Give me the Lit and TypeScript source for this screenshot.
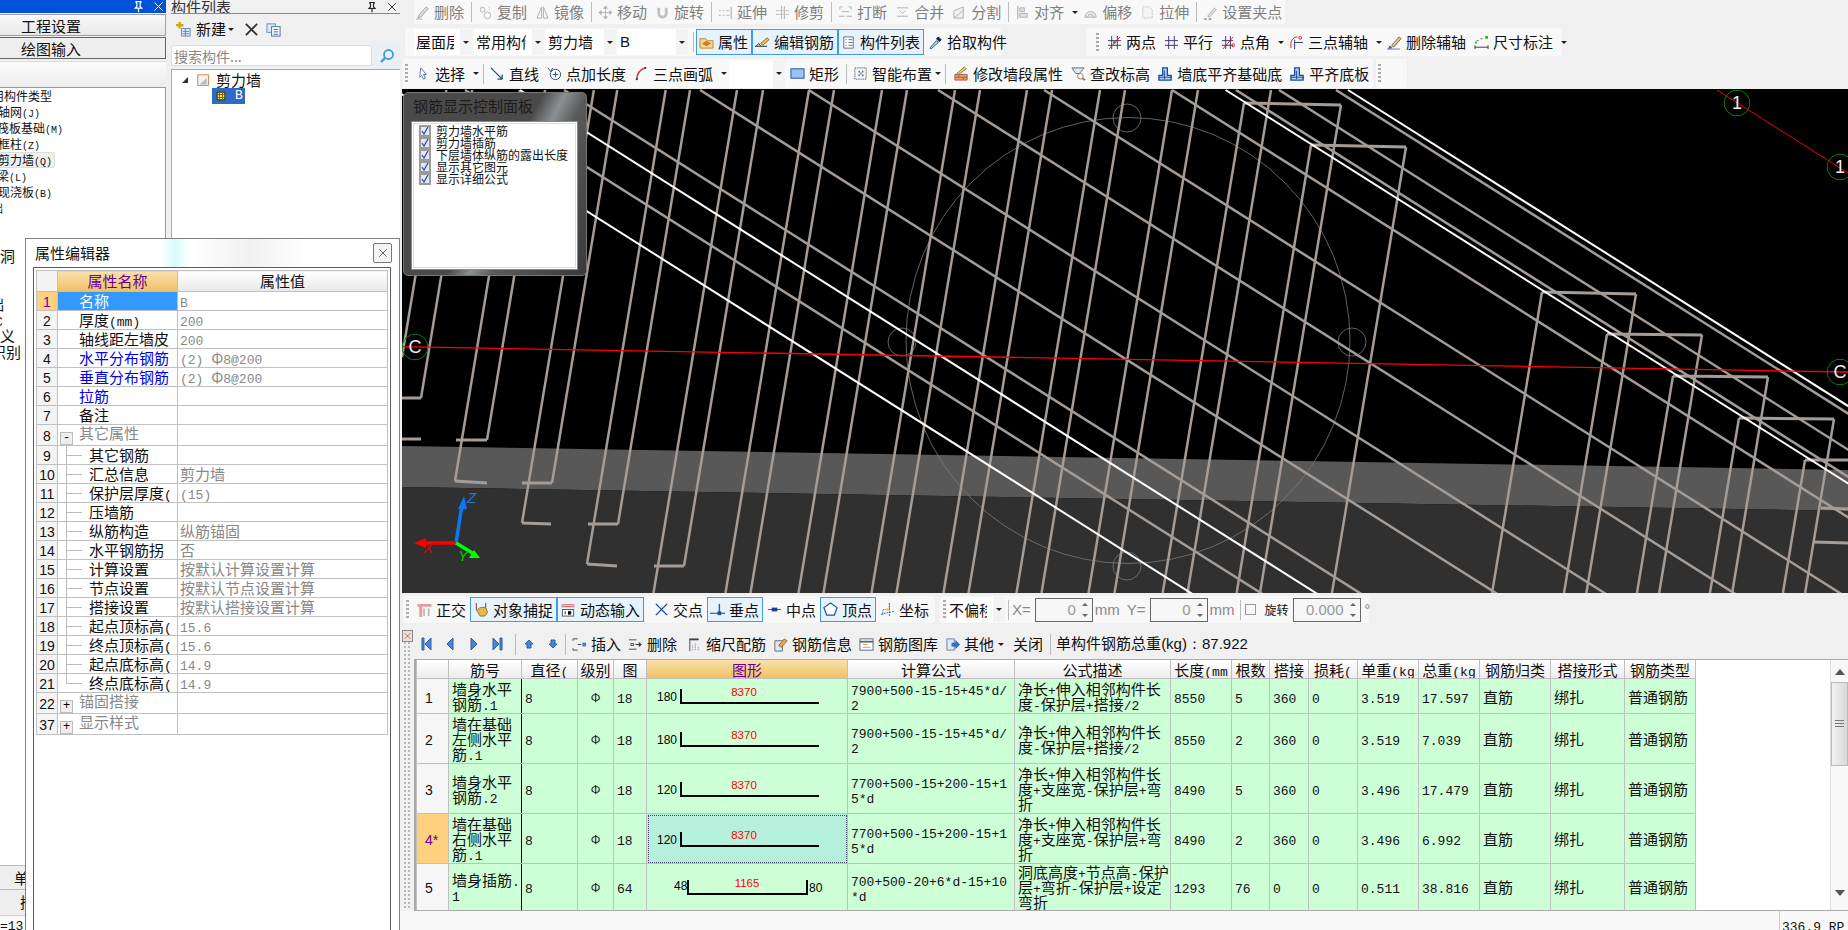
import { LitElement, html, css, svg } from 'lit';
import { customElement } from 'lit/decorators.js';

const mix = (s: string) =>
  s.split('\n').map(
    (line, i) => html`${i ? html`<br />` : ''}${line
      .split(/([\x20-\x7e]+)/)
      .map((p, j) => (j % 2 ? html`<span class="a">${p}</span>` : p))}`
  );

const ICONS: Record<string, unknown> = {
  del: svg`<path d="M3 14l3-1 8-9-2-2-8 9z" fill="#ddd" stroke="#999"/><path d="M1 15h7" stroke="#aaa"/>`,
  copy: svg`<circle cx="5" cy="5" r="2.5" fill="none" stroke="#aaa"/><circle cx="10" cy="11" r="3.5" fill="none" stroke="#aaa"/><path d="M2 2h3M12 2v3" stroke="#bbb" stroke-dasharray="1 1"/>`,
  mirror: svg`<path d="M7 2L2 14h5zM9 2l5 12H9z" fill="none" stroke="#aaa"/>`,
  move: svg`<path d="M8 1v14M1 8h14M8 1L6 3.5h4zM8 15l-2-2.500h4zM1 8l2.500-2v4zM15 8l-2.500-2v4z" fill="#ccc" stroke="#aaa"/>`,
  rotate: svg`<path d="M4 3v6a4 4 0 008 0V3" fill="none" stroke="#bbb" stroke-width="3"/>`,
  extend: svg`<path d="M1 6h2M5 6h2M1 11h2M5 11h2M9 6h3M9 11h3" stroke="#aaa"/><path d="M14 2v13" stroke="#999"/>`,
  trim: svg`<path d="M7 1v14M10 1v14" stroke="#aaa"/><path d="M1 6h14M1 10h14" stroke="#bbb"/>`,
  brk: svg`<path d="M2 5V2h3M14 5V2h-3M1 12h6M9 12h6M4 7h8" stroke="#aaa" fill="none"/>`,
  merge: svg`<path d="M2 3h12M2 12h12M5 6l3 3 3-3" stroke="#aaa" fill="none"/>`,
  split: svg`<path d="M2 14V6l10-4v12z M2 14l11-9" stroke="#aaa" fill="#eee"/>`,
  align: svg`<path d="M3 1v14" stroke="#999"/><path d="M5 3h5v4H5zM5 9h8v4H5z" fill="#ddd" stroke="#aaa"/>`,
  offset: svg`<path d="M2 13a6 6 0 0112 0z M5 13a3 3 0 016 0" fill="#e8e8e8" stroke="#aaa"/>`,
  stretch: svg`<path d="M3 2h7l3 3v9H3z" fill="#f4f4f4" stroke="#bbb" stroke-dasharray="2 1"/>`,
  grip: svg`<path d="M5 12l7-9 2 2-7 8z" fill="#ddd" stroke="#aaa"/><path d="M1 15h3M6 15h3" stroke="#999" stroke-width="2"/>`,
  prop: svg`<path d="M1 4h6l2 2h6v8H1z" fill="#f7d98a" stroke="#b8863a"/><path d="M3 9l5-3 5 3-5 3z" fill="#d8772a"/>`,
  edit: svg`<path d="M6 9l7-6 2 2-7 6z" fill="#f4c542" stroke="#886622"/><path d="M0 12h13" stroke="#222"/><path d="M1 12l3-3 2 3" fill="none" stroke="#333"/>`,
  list: svg`<path d="M3 2h10v12H3z" fill="#fff" stroke="#667"/><path d="M5 5h1M5 8h1M5 11h1" stroke="#36a"/><path d="M8 5h4M8 8h4M8 11h4" stroke="#667"/>`,
  pick: svg`<path d="M2 14l7-8 2 2-8 7z" fill="#bde" stroke="#15a"/><path d="M9 4l2-2 3 3-2 2z" fill="#124" stroke="#124"/>`,
  two: svg`<path d="M5 1v14M11 1v14M1 6h14M1 11h14" stroke="#336"/><path d="M2 15L14 2" stroke="#c22"/><circle cx="8" cy="8" r="1.500" fill="#2a2"/>`,
  par: svg`<path d="M5 1v14M11 1v14M1 6h14M1 11h14" stroke="#336"/>`,
  ang: svg`<path d="M5 1v14M10 1v14M1 6h12M1 11h12" stroke="#336"/><path d="M2 15L13 2" stroke="#c22"/><circle cx="13" cy="11" r="1.500" fill="none" stroke="#c22"/>`,
  arc3: svg`<path d="M2 14V9a7 7 0 017-7" fill="none" stroke="#c22"/><path d="M6 15V5M6 8h9" stroke="#336"/><circle cx="12" cy="3" r="1.500" fill="none" stroke="#c22"/>`,
  delax: svg`<path d="M5 11l8-9 2 2-8 9z" fill="#e9c46a" stroke="#667"/><path d="M3 11l3 3-5 1z" fill="#558"/><path d="M0 15h14" stroke="#58a"/>`,
  dim: svg`<path d="M1 13h14M1 11v4M15 11v4" stroke="#333"/><path d="M3 6h2M7 4h2" stroke="#555"/><rect x="12" y="1" width="3" height="3" fill="#3a3"/><rect x="1" y="7" width="2" height="2" fill="#3a3"/>`,
  sel: svg`<path d="M5 2l6 7H8l2 4-2 1-2-4-2 2z" fill="#fff" stroke="#57a"/>`,
  line: svg`<path d="M1 2l12 12M13 14V9M13 14H8" fill="none" stroke="#157" stroke-width="1.400"/>`,
  addlen: svg`<circle cx="9" cy="9" r="5.500" fill="#fff" stroke="#247"/><path d="M9 6v6M6 9h6" stroke="#247"/><path d="M1 2l3 4 2-4" fill="none" stroke="#247"/>`,
  arc: svg`<path d="M3 14C3 8 6 4 12 2" fill="none" stroke="#c33" stroke-width="1.500"/><circle cx="3" cy="14" r="1.200" fill="#246"/><circle cx="12" cy="2" r="1.200" fill="#246"/>`,
  rect: svg`<rect x="1" y="3" width="14" height="10" fill="#9cc4f2" stroke="#1a4fa8"/>`,
  smart: svg`<rect x="2" y="2" width="12" height="12" fill="#f2f6fa" stroke="#333" stroke-dasharray="1 1"/><path d="M6 6h1M10 6h1M6 10h1M10 10h1M8 8h1" stroke="#124" stroke-width="2"/>`,
  wall: svg`<path d="M1 9h13v6H1z" fill="#e6a45c" stroke="#a55"/><path d="M1 12h13M5 9v3M10 12v3" stroke="#a55"/><path d="M3 8l8-7 2 2-8 6z" fill="#f0d060" stroke="#775"/>`,
  height: svg`<path d="M1 2h13l-5 6H5z" fill="#dfe8f0" stroke="#667"/><circle cx="10" cy="11" r="3" fill="#fff" stroke="#975"/><path d="M12 13l3 2" stroke="#975" stroke-width="2"/>`,
  base: svg`<path d="M5 2h5v8h4v5H1v-5h4z" fill="#bcd4f0" stroke="#154a9c" stroke-width="1.400"/><path d="M7 5v9M1 12h14" stroke="#154a9c"/>`,
  ortho: svg`<path d="M1 2h15v3H6v11H3V5H1z" fill="#e59a9a"/><path d="M8 7v8M13 7v8" stroke="#bbb" stroke-width="2"/>`,
  snap: svg`<path d="M3 1v8M13 1v8" stroke="#733"/><path d="M4 10c0-4 6-5 9-4l2 5-3 4H7z" fill="#e8b84e" stroke="#96701f"/>`,
  dyn: svg`<path d="M1 3h14M1 5h14" stroke="#c55"/><rect x="2" y="8" width="12" height="7" fill="#fff" stroke="#555"/><path d="M5 10v3M8 10h3v3H8" stroke="#222"/>`,
  cross: svg`<path d="M2 2l12 12M14 2L2 14" stroke="#0f3f9e" stroke-width="1.400"/>`,
  perp: svg`<path d="M0 12h16" stroke="#333"/><path d="M10 2v10" stroke="#1d5fc0" stroke-width="1.500"/><rect x="8" y="10" width="4" height="4" fill="#1d4fa0"/>`,
  mid: svg`<path d="M1 8h14" stroke="#357"/><rect x="5" y="6" width="6" height="4" fill="#1d3f90"/>`,
  vertex: svg`<path d="M8 1l7 5-3 8H4L1 6z" fill="#fff" stroke="#1d4fa0" stroke-width="1.300"/>`,
  coord: svg`<path d="M3 14V8h7V2" fill="none" stroke="#26a" stroke-dasharray="1 1"/><path d="M1 13l14-3M10 1v14" stroke="#26a" stroke-dasharray="2 1"/><circle cx="8" cy="8" r="1.500" fill="#fc3"/>`,
  ins: svg`<path d="M1 2h5M1 14h5M1 2v2M1 12v2" stroke="#444"/><path d="M6 8h4" stroke="#444"/><rect x="11" y="6" width="4" height="4" fill="#4a7fc8"/>`,
  del2: svg`<path d="M1 3h8M1 13h8M3 7h3v2H3z" stroke="#445" fill="none"/><path d="M8 8h6M14 8l-2-2v4z" fill="#333" stroke="#333"/>`,
  scale: svg`<path d="M3 2h9v1H3zM3 2v13" stroke="#445"/><path d="M6 14V9M9 14V6M12 14v-3" stroke="#4a7fc8" stroke-dasharray="1 1"/>`,
  info: svg`<path d="M2 4h8v11H2z" fill="#dfe8f3" stroke="#667"/><path d="M6 9l6-7 3 2-6 7z" fill="#e7a94e" stroke="#964"/>`,
  lib: svg`<rect x="1" y="2" width="14" height="12" fill="#fff" stroke="#567"/><path d="M1 5h14" stroke="#567" stroke-width="2"/><path d="M4 8h5M4 11h8" stroke="#c9a050"/>`,
  other: svg`<path d="M2 2h8v12H2z" fill="#dce8f5" stroke="#6a88a8"/><path d="M7 6h4V3l5 5-5 5v-3H7z" fill="#2f6fc4"/>`,
  add: svg`<rect x="6" y="7" width="9" height="8" fill="#e3eefb" stroke="#5b86be"/><path d="M7 10h7M7 12.500h7M10 7v8" stroke="#5b86be"/><path d="M4 0v7M0 3.500h8" stroke="#d2a916" stroke-width="2.600"/>`,
  x: svg`<path d="M2 2l12 12M14 2L2 14" stroke="#333" stroke-width="2"/>`,
  dup: svg`<rect x="1" y="2" width="9" height="9" fill="#d9e8f8" stroke="#6b8fba"/><rect x="6" y="5" width="9" height="10" fill="#fff" stroke="#3a6ea5"/><path d="M8 8h5M8 10.500h5M8 13h5" stroke="#3a6ea5"/>`,
  find: svg`<circle cx="9.500" cy="6.500" r="4.500" fill="#e8f6ff" stroke="#3f9bde" stroke-width="1.800"/><path d="M6 10l-4 4" stroke="#3f9bde" stroke-width="2.400"/>`,
  wallnode: svg`<rect x="1" y="1" width="13" height="13" fill="#f2f2f2" stroke="#c8703a"/><path d="M3 13l9-8v8z" fill="#bbb"/>`,
  node: svg`<rect x="3" y="3" width="10" height="10" fill="#ffee22" stroke="#222"/><path d="M1 6h14M1 10h14M6 1v14M10 1v14" stroke="#664400"/>`,
  pin: svg`<path d="M5 2h6v1l-1 1v4l2 2H4l2-2V4L5 3zM8 10v5" fill="none" stroke="currentColor" stroke-width="1.500"/>`,
  close: svg`<path d="M3 3l10 10M13 3L3 13" stroke="currentColor" stroke-width="1.200"/>`,
};

const ic = (name: string) => html`<svg class="ic" viewBox="0 0 16 16">${ICONS[name]}</svg>`;
const tool = (name: string, label: string) => html`<span class="tool">${ic(name)}<span>${label}</span></span>`;
const on = (name: string, label: string) => html`<span class="tool on">${ic(name)}<span>${label}</span></span>`;
const caret = html`<i class="caret"></i>`;
const sep = html`<i class="sep"></i>`;
const dots = html`<i class="dots"></i>`;
const combo = (label: string, cls: string) =>
  html`<span class="combo ${cls}"><span class="combo-text">${label}</span><span class="combo-drop">${caret}</span></span>`;
const spin = (value: string, cls = '') =>
  html`<span class="spin ${cls}"><span class="spin-val">${value}</span><span class="spin-arrows"><i></i><i></i></span></span>`;

// label, left offset: the dock is scrolled sideways so the names start cut off
const TREE: [string, number][] = [
  ['用构件类型', -8], ['轴网(J)', -2], ['筏板基础(M)', -3], ['框柱(Z)', -2],
  ['剪力墙(Q)', -2], ['梁(L)', -3], ['现浇板(B)', -2], ['础', -9],
  ['', 0], ['', 0], ['窗洞', -15], ['', 0], ['', 0],
  ['础', -11], ['C', -5], ['定义', -15], ['识别', -9],
];

// num, name, value, kind (b = blue, c = tree child, l = last child, + / - box)
const PROPS: [string, string, string, string][] = [
  ['1', '名称', 'B', 'sel'],
  ['2', '厚度(mm)', '200', ''],
  ['3', '轴线距左墙皮', '200', ''],
  ['4', '水平分布钢筋', '(2) Φ8@200', 'b'],
  ['5', '垂直分布钢筋', '(2) Φ8@200', 'b'],
  ['6', '拉筋', '', 'b'],
  ['7', '备注', '', ''],
  ['8', '其它属性', '', '-'],
  ['9', '其它钢筋', '', 'c'],
  ['10', '汇总信息', '剪力墙', 'c'],
  ['11', '保护层厚度(', '(15)', 'c'],
  ['12', '压墙筋', '', 'c'],
  ['13', '纵筋构造', '纵筋锚固', 'c'],
  ['14', '水平钢筋拐', '否', 'c'],
  ['15', '计算设置', '按默认计算设置计算', 'c'],
  ['16', '节点设置', '按默认节点设置计算', 'c'],
  ['17', '搭接设置', '按默认搭接设置计算', 'c'],
  ['18', '起点顶标高(', '15.6', 'c'],
  ['19', '终点顶标高(', '15.6', 'c'],
  ['20', '起点底标高(', '14.9', 'c'],
  ['21', '终点底标高(', '14.9', 'l'],
  ['22', '锚固搭接', '', '+'],
  ['37', '显示样式', '', '+'],
];

const COLS = [32, 73, 56, 36, 33, 201, 167, 156, 61, 38, 39, 49, 61, 61, 71, 74, 71];
const HEAD = ['', '筋号', '直径(', '级别', '图', '图形', '计算公式', '公式描述', '长度(mm', '根数', '搭接', '损耗(', '单重(kg', '总重(kg', '钢筋归类', '搭接形式', '钢筋类型'];

interface Bar {
  n: string; h: number; name: string; d: string; left: string; right?: string; mid: string;
  fx: string; desc: string; len: string; cnt: string; lap: string; w: string; total: string;
}

const FX1 = '7900+500-15-15+45*d/\n2';
const FX2 = '7700+500-15+200-15+1\n5*d';
const DS1 = '净长+伸入相邻构件长\n度-保护层+搭接/2';
const DS2 = '净长+伸入相邻构件长\n度+支座宽-保护层+弯\n折';

const BARS: Bar[] = [
  { n: '1', h: 35, name: '墙身水平\n钢筋.1', d: '18', left: '180', mid: '8370', fx: FX1, desc: DS1, len: '8550', cnt: '5', lap: '360', w: '3.519', total: '17.597' },
  { n: '2', h: 50, name: '墙在基础\n左侧水平\n筋.1', d: '18', left: '180', mid: '8370', fx: FX1, desc: DS1, len: '8550', cnt: '2', lap: '360', w: '3.519', total: '7.039' },
  { n: '3', h: 50, name: '墙身水平\n钢筋.2', d: '18', left: '120', mid: '8370', fx: FX2, desc: DS2, len: '8490', cnt: '5', lap: '360', w: '3.496', total: '17.479' },
  { n: '4*', h: 50, name: '墙在基础\n右侧水平\n筋.1', d: '18', left: '120', mid: '8370', fx: FX2, desc: DS2, len: '8490', cnt: '2', lap: '360', w: '3.496', total: '6.992' },
  { n: '5', h: 46, name: '墙身插筋.\n1', d: '64', left: '48', right: '80', mid: '1165', fx: '700+500-20+6*d-15+10\n*d', desc: '洞底高度+节点高-保护\n层+弯折-保护层+设定\n弯折', len: '1293', cnt: '76', lap: '0', w: '0.511', total: '38.816' },
];

const shape = (b: Bar) => {
  if (b.right) {
    return html`<svg class="shape" viewBox="0 0 200 30">
      <path d="M41 8v14h119V8" fill="none" stroke="#000" stroke-width="2" />
      <text x="27" y="18" class="dim">${b.left}</text>
      <text x="162" y="20" class="dim">${b.right}</text>
      <text x="100" y="15" text-anchor="middle" class="len">${b.mid}</text>
    </svg>`;
  }
  return html`<svg class="shape" viewBox="0 0 200 30">
    <path d="M34 8v14h138" fill="none" stroke="#000" stroke-width="2" />
    <text x="10" y="20" class="dim">${b.left}</text>
    <text x="97" y="15" text-anchor="middle" class="len">${b.mid}</text>
  </svg>`;
};

const LEAN = 0.166;
const SLOPE = 0.632;

// a leg runs up from its low end, leaning right, to the given height
const leg = (x: number, y: number, top: number) => [x, y, x + LEAN * (y - top), top];
const down = (x: number, y: number) => [x, y, x - LEAN * (593 - y), 593];

const TAN_DIAG = [465, 564, 700, 808.6, 938, 1044, 1172, 1236, 1279, 1336];
const WHITE_DIAG = [395, 520, 1225.6, 1348];
const FULL_LEGS = [737, 809, 834, 882, 907, 955, 980, 1027, 1052, 1100, 1125, 1172, 1198, 1271];
const LOW_LEGS = [[402, 357], [421, 398], [455, 481], [487, 440], [522, 523], [552, 483], [587, 564], [618, 524], [684, 566]];
const HOOKS = [
  [402, 398, 421, 398], [402, 439, 421, 439], [456, 440, 487, 440], [455, 481, 487, 483],
  [522, 523, 551, 524], [522, 483, 552, 483], [587, 564, 617, 566], [588, 524, 618, 524], [654, 566, 684, 566],
  [1244, 103, 1341, 105], [1311, 145, 1406, 147], [1542, 292, 1636, 294], [1607, 334, 1702, 335],
  [1673, 376, 1768, 377], [1739, 418, 1834, 419], [1805, 460, 1848, 460], [1821, 508, 1848, 509], [1814, 542, 1848, 543],
];
const TOP_LEGS = [[1244, 103], [1341, 105], [1311, 145], [1406, 147], [1542, 292], [1636, 294], [1607, 334], [1702, 335], [1673, 376], [1768, 377], [1739, 418], [1834, 419], [1805, 460]];

const seg = (l: number[], cls: string) => svg`<line x1=${l[0]} y1=${l[1]} x2=${l[2]} y2=${l[3]} class=${cls} />`;
const diag = (x0: number) => [x0, 90, x0 + 900, 90 + 900 * SLOPE];

const bubble = (x: number, y: number, label: string) => {
  const pts = Array.from({ length: 12 }, (_, i) => {
    const a = (i * Math.PI) / 6 + Math.PI / 12;
    return `${(x + 13 * Math.cos(a)).toFixed(1)},${(y + 13 * Math.sin(a)).toFixed(1)}`;
  }).join(' ');
  return svg`<polygon points=${pts} class="bubble" /><text x=${x} y=${y + 6} text-anchor="middle" class="bubble-text">${label}</text>`;
};

@customElement('app-root')
export class AppRoot extends LitElement {
  static styles = css`
    :host {
      display: flex;
      width: 1848px;
      height: 930px;
      overflow: hidden;
      position: relative;
      background: #f0f0f0;
      font: 15px/18px "Noto Sans CJK SC", "Liberation Sans", sans-serif;
      color: #111;
    }
    .a { font: 13px/0 "Liberation Mono", monospace; }
    i { display: block; font-style: normal; }
    .ic { width: 15px; height: 15px; flex: none; display: block; }

    /* left docks */
    .left { width: 400px; flex: none; display: flex; gap: 5px; }
    .nav { width: 166px; flex: none; display: flex; flex-direction: column; }
    .dock-title {
      height: 13px;
      flex: none;
      background: #0053d8;
      color: #fff;
      display: flex;
      justify-content: flex-end;
      align-items: center;
      gap: 7px;
      padding-right: 1px;
    }
    .dock-title .ic { width: 13px; height: 13px; }
    .nav-btn {
      height: 22px;
      margin-top: 1px;
      flex: none;
      padding-left: 21px;
      line-height: 21px;
      font-size: 15px;
      background: linear-gradient(#fafafa, #e8e8e8);
      border: 1px solid #a0a0a0;
      border-left: 0;
      box-sizing: border-box;
    }
    .nav-btn.dark { border-color: #666; background: #eee; }
    .nav-bar { height: 26px; margin-top: 2px; flex: none; background: linear-gradient(#fbfbfb, #ececec); border-top: 1px solid #ddd; box-sizing: border-box; }
    .nav-tree {
      flex: 1;
      background: #fff;
      border: 1px solid #9a9a9a;
      border-left: 0;
      border-bottom: 0;
      overflow: hidden;
    }
    .nav-row { height: 16px; line-height: 16px; font-size: 12px; white-space: nowrap; }
    .nav-row.big { font-size: 15px; }
    .nav-row span.label { display: inline-block; padding-right: 3px; }
    .nav-row .a { font-size: 10px; }
    .nav-row.big .a { font-size: 13px; }
    .nav-row.hot span.label { background: #efefef; border-radius: 3px; box-shadow: inset 0 0 0 1px #ddd; }
    .nav-foot {
      height: 23px;
      flex: none;
      background: #eee;
      border-top: 1px solid #bbb;
      text-align: right;
      line-height: 23px;
      overflow: hidden;
    }
    .f1 { padding-right: 137px; }
    .f2 { padding-right: 131px; }
    .nav-end { height: 14px; flex: none; line-height: 16px; margin-top: 2px; background: #fafafa; border-top: 1px solid #ccc; overflow: hidden; }

    .list { flex: 1; display: flex; flex-direction: column; min-width: 0; }
    .list-title {
      height: 13px;
      flex: none;
      display: flex;
      justify-content: space-between;
      align-items: center;
      border-bottom: 1px solid #888;
      overflow: hidden;
      font-size: 15px;
      line-height: 10px;
      color: #333;
      padding-right: 2px;
    }
    .list-title div { display: flex; gap: 8px; }
    .list-title .ic { width: 12px; height: 12px; color: #222; }
    .list-bar { height: 30px; flex: none; display: flex; align-items: center; gap: 7px; padding-left: 5px; }
    .list-bar .tool { gap: 5px; }
    .list-search { height: 23px; flex: none; display: flex; align-items: center; background: #eaf0f5; }
    .list-search div {
      width: 201px;
      height: 21px;
      line-height: 20px;
      background: #fff;
      border: 1px solid #ddd;
      border-radius: 2px;
      color: #888;
      font-size: 14px;
      padding-left: 2px;
      box-sizing: border-box;
    }
    .list-search .ic { margin-left: 7px; width: 16px; height: 16px; }
    .list-tree { flex: 1; margin-top: 2px; background: #fff; border-top: 1px solid #aaa; border-left: 1px solid #aaa; padding: 2px 0 0 10px; }
    .node { display: flex; align-items: center; height: 16px; }
    .node .tri { width: 0; height: 0; border-left: 6px solid transparent; border-bottom: 6px solid #333; margin: 0 9px 0 0; }
    .node .ic { width: 13px; height: 13px; margin-right: 6px; }
    .node-child { margin: 0 0 0 30px; width: 33px; background: #2f6bc4; color: #fff; height: 16px; display: flex; align-items: center; padding-left: 3px; box-sizing: border-box; }
    .node-child .ic { width: 12px; height: 12px; margin-right: 8px; }

    /* property window */
    .props {
      position: absolute;
      left: 25px;
      top: 238px;
      width: 375px;
      height: 692px;
      box-sizing: border-box;
      border: 1px solid #808080;
      border-bottom: 0;
      padding: 0 8px 0 7px;
      background: linear-gradient(90deg, #fff 0 36%, #d9fafa 40%, #fff 44%, #f1f1f1 60%, #fff 75%);
      display: flex;
      flex-direction: column;
    }
    .props-title { height: 28px; flex: none; display: flex; justify-content: space-between; align-items: center; padding-left: 2px; }
    .props-close { width: 19px; height: 20px; border: 1px solid #777; border-radius: 2px; box-sizing: border-box; display: flex; align-items: center; justify-content: center; background: #f4f4f4; margin-right: -1px; }
    .props-close .ic { width: 12px; height: 12px; color: #555; }
    .props-body { flex: 1; background: #fff; border: 1px solid #5a5a5a; border-bottom: 0; padding: 2px 0 0 2px; }
    .props table { border-collapse: collapse; table-layout: fixed; width: 351px; }
    .props td, .props th { border: 1px solid #c0c0c0; height: 18px; padding: 0; line-height: 16px; font-weight: 400; white-space: nowrap; overflow: hidden; }
    .props th { height: 20px; background: linear-gradient(#fff, #e8e8e8); }
    .props th.hot { background: linear-gradient(#fae0ac, #f2bf63); color: #660099; }
    .props .num { background: #f4f4f4; text-align: center; }
    .props .num .a, .grid .num .a { font-family: "Liberation Sans", sans-serif; font-size: 14px; }
    .props .val { color: #888; padding-left: 2px; }
    .props .name { padding-left: 21px; }
    .props .child { padding-left: 31px; background: linear-gradient(#bbb, #bbb) 8px 0/1px 100% no-repeat, linear-gradient(#bbb, #bbb) 8px 50%/16px 1px no-repeat; }
    .props .last { padding-left: 31px; background: linear-gradient(#bbb, #bbb) 8px 0/1px 50% no-repeat, linear-gradient(#bbb, #bbb) 8px 50%/16px 1px no-repeat; }
    .props .blue { color: #0000f0; }
    .props .group { color: #888; padding-left: 2px; }
    .props .sel { background: #3399ff; color: #fff; }
    .props .numsel { background: #ffd080; color: #660099; }
    .box { display: inline-block; vertical-align: -2px; width: 11px; height: 11px; border: 1px solid #bbb; background: #eee; color: #000; text-align: center; font: 12px/10px "Liberation Mono", monospace; margin-right: 6px; }

    /* main column */
    .main { flex: 1; min-width: 0; display: flex; flex-direction: column; }
    .row { display: flex; flex: none; }
    .r1 { height: 24px; }
    .r2 { height: 28px; margin-top: 4px; }
    .r3 { height: 29px; margin-top: 3px; }
    .band { display: flex; align-items: center; gap: 8px; background: #f8f8f8; border-radius: 2px; padding: 0 4px 0 2px; }
    .r1 .band { width: 870px; margin-left: 14px; padding: 0 0 0 1px; color: #808080; }
    .r1 .ic { opacity: 0.9; }
    .r2 .b1 { margin-left: 5px; padding-left: 9px; width: 596px; box-sizing: border-box; }
    .r2 .b2 { margin-left: 85px; padding-left: 10px; width: 476px; box-sizing: border-box; }
    .r3 .b1 { margin-left: 3px; width: 970px; box-sizing: border-box; }
    .r3 .b2 { margin-left: 3px; width: 31px; box-sizing: border-box; }
    .tool { display: flex; align-items: center; gap: 4px; white-space: nowrap; flex: none; }
    .tool.on { background: #e6f2fc; box-shadow: inset 0 0 0 1px #3d9be9; height: 26px; padding: 0 4px 0 3px; }
    .caret { width: 0; height: 0; border: 3px solid transparent; border-top-color: #222; border-bottom: 0; margin-right: -3px; flex: none; }
    .caret.tight { margin-left: -5px; }
    .sep { width: 1px; height: 20px; background: #bbb; margin: 0 -2px 0 -1px; flex: none; }
    .dots { width: 3px; height: 19px; flex: none; background: repeating-linear-gradient(#aaa 0 2px, transparent 2px 4px); }
    .combo { display: flex; height: 26px; background: #fff; flex: none; align-items: center; overflow: hidden; }
    .combo-text { flex: 1; overflow: hidden; white-space: nowrap; margin: 0 6px 0 2px; min-width: 0; }
    .combo-drop { width: 12px; height: 100%; background: #f3f3f3; display: flex; align-items: center; justify-content: center; flex: none; }
    .combo-drop .caret { margin: 0; }
    .c58 { width: 58px; }
    .c70 { width: 70px; margin-left: -6px; }
    .cb { font-family: "Liberation Sans", sans-serif; width: 70px; margin-left: -6px; }
    .blank { width: 56px; margin: 0 -3px 0 -3px; height: 28px; }
    .b1 .on + .on { margin-left: -8px; }
    .r2 .sep { margin: 0 -6px 0 -3px; }

    /* viewport */
    .view { position: relative; height: 504px; margin: 1px 0 0 2px; flex: none; background: #000; }
    .view svg { display: block; }
    .t { stroke: #a69c96; stroke-width: 2.500; }
    .w { stroke: #fff; stroke-width: 2; }
    .k { stroke: #a69c96; stroke-width: 3; }
    .ghost { fill: none; stroke: #7a7a7a; stroke-width: 0.800; }
    .bubble { fill: none; stroke: #0c7a0c; stroke-width: 1; }
    .bubble-text { fill: #eee; font: 18px "Liberation Sans", sans-serif; }
    .axis-label { font: italic 15px "Liberation Sans", sans-serif; }
    .panel {
      position: absolute;
      left: 1px;
      top: 3px;
      width: 184px;
      height: 184px;
      box-sizing: border-box;
      border: 1px solid #777;
      border-radius: 5px;
      background: linear-gradient(118deg, #4a4a4a 0 50%, #8b9093 58%, #5a5a5a 66%, #3a3a3a 100%);
      padding: 0 8px 5px 7px;
      display: flex;
      flex-direction: column;
    }
    .panel-title { height: 28px; flex: none; line-height: 26px; padding-left: 2px; color: #1c1c1c; font-size: 15px; }
    .panel-box { flex: 1; background: #fff; border: 1px solid #888; outline: 1px solid #ddd; outline-offset: -3px; padding: 3px 0 0 7px; box-sizing: border-box; }
    .check { display: flex; align-items: center; gap: 5px; height: 12px; font-size: 12px; line-height: 12px; white-space: nowrap; }
    .check .mark { width: 12px; height: 12px; flex: none; box-sizing: border-box; border: 2px solid #999; background: #e4e8f4; }
    .check svg { width: 8px; height: 8px; display: block; }

    /* snap bar */
    .snap { height: 27px; margin-top: 3px; flex: none; display: flex; gap: 1px; padding-left: 3px; }
    .snap .band { gap: 4px; padding: 0; height: 27px; box-sizing: border-box; }
    .snap .s1 { width: 241px; padding-left: 3px; }
    .snap .s1 .dots { margin-right: 3px; }
    .snap .s1 .ic { width: 16px; }
    .snap .s2 { width: 290px; padding-left: 9px; }
    .snap .s3 { margin-left: 4px; width: 429px; padding-left: 3px; color: #888; }
    .snap .on { height: 25px; }
    .snap .s3 .combo { width: 58px; height: 25px; margin-left: -3px; color: #111; }
    .spin { display: flex; align-items: center; width: 58px; height: 24px; box-sizing: border-box; border: 1px solid #666; background: #f6f6f6; flex: none; color: #999; }
    .spin.big { width: 68px; }
    .spin-val { flex: 1; text-align: right; padding-right: 3px; font: 15px "Liberation Sans", sans-serif; }
    .spin-arrows { width: 13px; display: flex; flex-direction: column; align-items: center; gap: 8px; }
    .spin-arrows i { width: 0; height: 0; border: 3px solid transparent; border-top: 0; border-bottom-color: #666; }
    .spin-arrows i + i { border-bottom: 0; border-top: 3px solid #666; }
    .latin { font-family: "Liberation Sans", sans-serif; font-size: 15px; white-space: nowrap; flex: none; }
    .lx { margin-left: 1px; }
    .lm { margin-left: -2px; }
    .ly { margin-left: 3px; }
    .snap .s3 .sep2 { margin: 0 0 0 1px; }
    .tick { width: 11px; height: 11px; border: 1px solid #999; flex: none; box-sizing: border-box; margin-right: 5px; }
    .turn { font-size: 12px; color: #111; white-space: nowrap; flex: none; }

    /* table toolbar */
    .gbar { height: 30px; margin-top: 6px; flex: none; display: flex; align-items: center; gap: 8px; padding-left: 20px; position: relative; }
    .gbar .nav-ic { width: 12px; height: 14px; margin-right: 4px; flex: none; }
    .gbar .sep { margin: 0 -1px; height: 21px; }
    .gbar .sep.back { margin-left: -6px; }
    .gbar .ic { margin-left: -1px; }
    .gbar .wide { margin-left: 3px; }
    .gbar-close { position: absolute; left: 2px; top: 1px; width: 9px; height: 10px; border: 1px solid #888; background: #f2dede; color: #a33; display: block; }
    .gbar-close svg { width: 9px; height: 10px; display: block; }
    .gbar .other-caret { margin: 0 1px 0 -4px; }
    .sum { margin-left: -2px; white-space: nowrap; }
    .sum .s { font: 15px "Liberation Sans", sans-serif; }

    /* rebar table */
    .gwrap { display: flex; flex: none; height: 252px; background: #fff; border-top: 1px solid #aaa; border-bottom: 1px solid #aaa; margin-left: 14px; border-left: 2px solid #aaa; box-sizing: border-box; }
    .gscroll { flex: 1; min-width: 0; overflow: hidden; }
    .grid { border-collapse: collapse; table-layout: fixed; width: 1279px; }
    .grid td, .grid th { border: 1px solid #c0c0c0; padding: 0 0 0 3px; font-weight: 400; line-height: 15px; overflow: hidden; white-space: nowrap; }
    .grid tr:first-child th { border-top: 0; }
    .grid tr:last-child td { border-bottom: 0; }
    .grid th { height: 18px; text-align: center; background: linear-gradient(#fff, #ececec); padding: 0; }
    .grid th.hot { background: linear-gradient(#fae0ac, #f2bf63); color: #660099; }
    .grid td { background: #ccffd6; }
    .grid td.num { background: #f6f6f6; padding-left: 8px; }
    .grid td.num.cur { background: #ffd080; color: #660099; padding-left: 8px; }
    .grid td.name { border-right: 1px solid #000; }
    .grid td.gr { text-align: center; padding: 0; font-size: 12px; }
    .grid td.pic { padding: 0; }
    .grid td.pic.cur { background: #b5f0dc; outline: 1px dotted #446; outline-offset: -2px; }
    .shape { width: 200px; height: 30px; display: block; }
    .dim { font: 12px "Liberation Sans", sans-serif; }
    .len { font: 11.500px "Liberation Sans", sans-serif; fill: #f00; }
    .vbar { width: 18px; flex: none; border-left: 1px solid #ddd; background: #f8f8f8; display: flex; flex-direction: column; align-items: center; box-sizing: border-box; padding-top: 9px; }
    .vbar .up { width: 0; height: 0; border: 5px solid transparent; border-top: 0; border-bottom: 6px solid #555; }
    .vbar .down { width: 0; height: 0; border: 5px solid transparent; border-bottom: 0; border-top: 6px solid #555; margin-top: 124px; }
    .vbar .thumb { width: 17px; height: 84px; margin-top: 7px; background: linear-gradient(90deg, #f2f2f2, #d8d8d8); border: 1px solid #bbb; box-sizing: border-box; display: flex; align-items: center; justify-content: center; }
    .vbar .thumb i { width: 9px; height: 9px; background: repeating-linear-gradient(#777 0 1px, transparent 1px 3px); }
    .status { flex: 1; display: flex; justify-content: flex-end; overflow: hidden; background: #f8f8f8; }
    .status div { width: 66px; border-left: 1px solid #ccc; padding: 6px 0 0 2px; white-space: nowrap; overflow: hidden; line-height: 16px; }
    .griprail { position: absolute; left: 403px; top: 641px; width: 8px; height: 269px; background: radial-gradient(circle, #bbb 1px, transparent 1.200px) 0 0/4px 4px; }
  `;

  private _nav() {
    return html`<div class="nav">
      <div class="dock-title">${ic('pin')}${ic('close')}</div>
      <div class="nav-btn">工程设置</div>
      <div class="nav-btn dark">绘图输入</div>
      <div class="nav-bar"></div>
      <div class="nav-tree">
        ${TREE.map(
          ([label, left], i) => html`<div class="nav-row ${i >= 8 ? 'big' : ''} ${label.startsWith('剪力墙') ? 'hot' : ''}">
            <span class="label" style="margin-left:${left}px">${mix(label)}</span>
          </div>`
        )}
      </div>
      <div class="nav-foot f1">单</div>
      <div class="nav-foot f2">搭</div>
      <div class="nav-end"><span class="a">=13</span></div>
    </div>`;
  }

  private _list() {
    return html`<div class="list">
      <div class="list-title">
        <span>构件列表</span>
        <div>${ic('pin')}${ic('close')}</div>
      </div>
      <div class="list-bar">
        ${tool('add', '新建')}
        <i class="caret" style="margin:0 3px 0 -5px"></i>
        ${ic('x')}${ic('dup')}
      </div>
      <div class="list-search"><div>搜索构件...</div>${ic('find')}</div>
      <div class="list-tree">
        <div class="node"><i class="tri"></i>${ic('wallnode')}剪力墙</div>
        <div class="node-child">${ic('node')}<span class="a">B</span></div>
      </div>
    </div>`;
  }

  private _props() {
    const nameCell = (kind: string, name: string) => {
      if (kind === '-' || kind === '+') {
        return html`<td class="group"><span class="box">${kind}</span>${name}</td>`;
      }
      const cls = { sel: 'name sel', b: 'name blue', c: 'child', l: 'last' }[kind] ?? 'name';
      return html`<td class=${cls}>${mix(name)}</td>`;
    };
    return html`<div class="props">
      <div class="props-title">
        <span>属性编辑器</span>
        <span class="props-close">${ic('close')}</span>
      </div>
      <div class="props-body">
        <table>
          <colgroup><col style="width:21px" /><col style="width:120px" /><col style="width:210px" /></colgroup>
          <tr><th class="num"></th><th class="hot">属性名称</th><th>属性值</th></tr>
          ${PROPS.map(
            ([num, name, val, kind]) => html`<tr>
              <td class="num ${kind === 'sel' ? 'numsel' : ''}">${mix(num)}</td>
              ${nameCell(kind, name)}
              <td class="val">${mix(val)}</td>
            </tr>`
          )}
        </table>
      </div>
    </div>`;
  }

  private _toolbars() {
    return html`
      <div class="row r1">
        <div class="band">
          ${tool('del', '删除')}${sep}${tool('copy', '复制')}${tool('mirror', '镜像')}${sep}
          ${tool('move', '移动')}${tool('rotate', '旋转')}${sep}${tool('extend', '延伸')}${tool('trim', '修剪')}${sep}
          ${tool('brk', '打断')}${tool('merge', '合并')}${tool('split', '分割')}${sep}
          ${tool('align', '对齐')}${caret}${tool('offset', '偏移')}${tool('stretch', '拉伸')}${sep}${tool('grip', '设置夹点')}
        </div>
      </div>
      <div class="row r2">
        <div class="band b1">
          ${combo('屋面层', 'c58')}${combo('常用构件', 'c70')}${combo('剪力墙', 'c70')}${combo('B', 'cb')}
          ${sep}${on('prop', '属性')}${on('edit', '编辑钢筋')}${on('list', '构件列表')}
          <span style="margin-left:-4px">${tool('pick', '拾取构件')}</span>
        </div>
        <div class="band b2">
          ${dots}${tool('two', '两点')}${tool('par', '平行')}${tool('ang', '点角')}${caret}
          ${tool('arc3', '三点辅轴')}${caret}${tool('delax', '删除辅轴')}${tool('dim', '尺寸标注')}${caret}
        </div>
      </div>
      <div class="row r3">
        <div class="band b1">
          ${dots}${tool('sel', '选择')}${caret}${sep}${tool('line', '直线')}${tool('addlen', '点加长度')}
          ${tool('arc', '三点画弧')}${caret}${combo('', 'blank')}${tool('rect', '矩形')}${sep}
          ${tool('smart', '智能布置')}<i class="caret tight"></i>${sep}<span style="margin-left:2px">${tool('wall', '修改墙段属性')}</span>
          ${tool('height', '查改标高')}${tool('base', '墙底平齐基础底')}${tool('base', '平齐底板')}
        </div>
        <div class="band b2">${dots}</div>
      </div>`;
  }

  private _view() {
    const legs = [
      ...FULL_LEGS.map((x) => [x, 90, x - LEAN * 503, 593]),
      ...LOW_LEGS.map(([x, y]) => leg(x, y, 90)),
      ...TOP_LEGS.map(([x, y]) => down(x, y)),
    ];
    const labels = ['剪力墙水平筋', '剪力墙插筋', '下层墙体纵筋的露出长度', '显示其它图元', '显示详细公式'];
    return html`<div class="view">
      <svg width="1446" height="504" viewBox="402 89 1446 504">
        <rect x="402" y="89" width="1446" height="504" fill="#000" />
        <polygon points="402,446 1848,470 1848,511 402,487" fill="#585858" />
        <polygon points="402,487 1848,511 1848,593 402,593" fill="#303030" />
        <ellipse cx="1128" cy="340.500" rx="222" ry="223" class="ghost" />
        <circle cx="902" cy="342" r="14" class="ghost" />
        <circle cx="1352" cy="342" r="14" class="ghost" />
        <circle cx="1127" cy="118" r="14" class="ghost" />
        <circle cx="1127" cy="566" r="14" class="ghost" />
        ${legs.map((l) => seg(l, 't'))}
        ${TAN_DIAG.map((x) => seg(diag(x), 't'))}
        ${HOOKS.map((l) => seg(l, 'k'))}
        ${WHITE_DIAG.map((x) => seg(diag(x), 'w'))}
        <path d="M402 346.700L1848 372" stroke="#f00" stroke-width="1.300" fill="none" />
        <path d="M1717 90L1848 173" stroke="#e00" stroke-width="1" fill="none" />
        ${bubble(1737, 103, '1')}${bubble(1840, 167, '1')}${bubble(1840, 372, 'C')}${bubble(415, 347, 'C')}
        <path d="M456 543L462 505" stroke="#0a78f0" stroke-width="3.500" />
        <path d="M464 496l-6 13h9z" fill="#0a78f0" />
        <path d="M456 543H425" stroke="#f00" stroke-width="3.500" />
        <path d="M414 543l12-5v10z" fill="#f00" />
        <path d="M456 543L474 554" stroke="#0f0" stroke-width="3.500" />
        <path d="M480 558l-11 0 5-8z" fill="#0f0" />
        <text x="467" y="503" class="axis-label" fill="#1a7ad0">Z</text>
        <text x="423" y="553" class="axis-label" fill="#d00">X</text>
        <text x="458" y="561" class="axis-label" fill="#0c0">Y</text>
      </svg>
      <div class="panel">
        <div class="panel-title">钢筋显示控制面板</div>
        <div class="panel-box">
          ${labels.map(
            (t) => html`<div class="check">
              <span class="mark"><svg viewBox="0 0 8 8"><path d="M1 4l2 3 4-7" fill="none" stroke="#2a4fa8" stroke-width="1.300" /></svg></span>${t}
            </div>`
          )}
        </div>
      </div>
    </div>`;
  }

  private _snap() {
    return html`<div class="snap">
      <div class="band s1">
        ${dots}${tool('ortho', '正交')}<span>${on('snap', '对象捕捉')}</span><span style="margin-left:-4px">${on('dyn', '动态输入')}</span>
      </div>
      <div class="band s2">
        ${tool('cross', '交点')}${on('perp', '垂点')}${tool('mid', '中点')}${on('vertex', '顶点')}${tool('coord', '坐标')}
      </div>
      <div class="band s3">
        ${dots}${combo('不偏移', '')}${sep}
        <span class="latin lx">X=</span>${spin('0')}
        <span class="latin lm">mm</span><span class="latin ly">Y=</span>${spin('0')}
        <span class="latin lm">mm</span><i class="sep sep2"></i>
        <i class="tick"></i><span class="turn">旋转</span>${spin('0.000', 'big')}
        <span>°</span>
      </div>
    </div>`;
  }

  private _gridBar() {
    const nav = (d: string) => html`<svg class="nav-ic" viewBox="0 0 12 14"><path d=${d} fill="#4a86d0" stroke="#2a5fa8" /></svg>`;
    return html`<div class="gbar">
      <span class="gbar-close"><svg viewBox="0 0 16 16">${ICONS.close}</svg></span>
      ${nav('M2 1h2v12H2zM11 1v12L5 7z')}${nav('M9 1v12L3 7z')}${nav('M3 1v12l6-6z')}${nav('M1 1v12l6-6zM8 1h2v12H8z')}
      ${sep}
      ${nav('M6 3l4 4H8v4H4V7H2z')}${nav('M6 11l4-4H8V3H4v4H2z')}
      <i class="sep back"></i>
      ${tool('ins', '插入')}${tool('del2', '删除')}<span class="wide">${tool('scale', '缩尺配筋')}</span>${tool('info', '钢筋信息')}${tool('lib', '钢筋图库')}
      ${tool('other', '其他')}<i class="caret other-caret"></i><span>关闭</span>${sep}
      <span class="sum">单构件钢筋总重<span class="s">(kg)：87.922</span></span>
    </div>`;
  }

  private _grid() {
    return html`<div class="gwrap">
      <div class="gscroll">
        <table class="grid">
          <colgroup>${COLS.map((w) => html`<col style="width:${w}px" />`)}</colgroup>
          <tr>${HEAD.map((h, i) => html`<th class=${i === 5 ? 'hot' : ''}>${mix(h)}</th>`)}</tr>
          ${BARS.map((b) => {
            const cur = b.n === '4*';
            return html`<tr style="height:${b.h}px">
              <td class="num ${cur ? 'cur' : ''}">${mix(b.n)}</td>
              <td class="name">${mix(b.name)}</td>
              <td>${mix('8')}</td>
              <td class="gr">Φ</td>
              <td>${mix(b.d)}</td>
              <td class="pic ${cur ? 'cur' : ''}">${shape(b)}</td>
              <td>${mix(b.fx)}</td>
              <td>${mix(b.desc)}</td>
              <td>${mix(b.len)}</td>
              <td>${mix(b.cnt)}</td>
              <td>${mix(b.lap)}</td>
              <td>${mix('0')}</td>
              <td>${mix(b.w)}</td>
              <td>${mix(b.total)}</td>
              <td>直筋</td>
              <td>绑扎</td>
              <td>普通钢筋</td>
            </tr>`;
          })}
        </table>
      </div>
      <div class="vbar"><i class="up"></i><div class="thumb"><i></i></div><i class="down"></i></div>
    </div>`;
  }

  render() {
    return html`
      <div class="left">${this._nav()}${this._list()}</div>
      <div class="main">
        ${this._toolbars()}${this._view()}${this._snap()}${this._gridBar()}${this._grid()}
        <div class="status"><div>${mix('336.9 RP')}</div></div>
      </div>
      ${this._props()}
      <i class="griprail"></i>
    `;
  }
}
